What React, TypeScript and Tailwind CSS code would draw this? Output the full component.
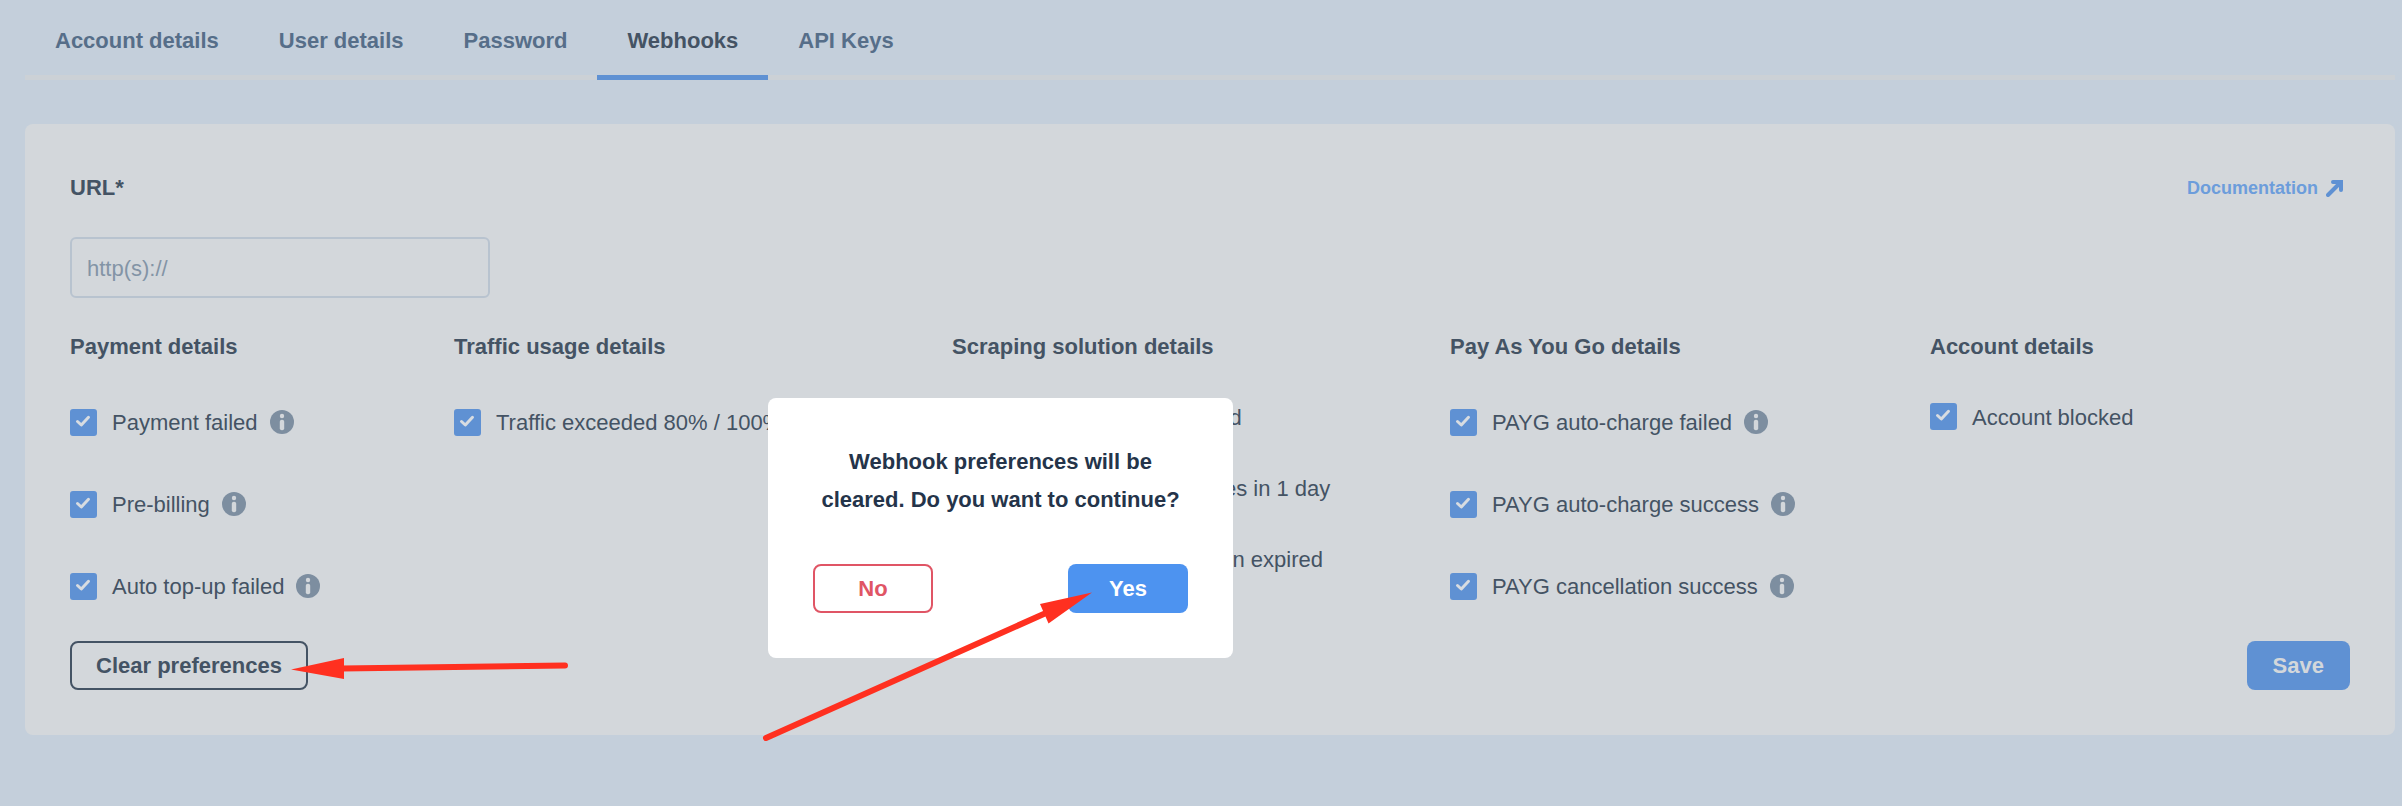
import { useState } from 'react';

type Option = { id: string; label: string; info?: boolean };
type Group = { title: string; options: Option[] };

const tabs = ['Account details', 'User details', 'Password', 'Webhooks', 'API Keys'];

const groups: Group[] = [
  {
    title: 'Payment details',
    options: [
      { id: 'payment-failed', label: 'Payment failed', info: true },
      { id: 'pre-billing', label: 'Pre-billing', info: true },
      { id: 'auto-top-up', label: 'Auto top-up failed', info: true },
    ],
  },
  {
    title: 'Traffic usage details',
    options: [{ id: 'traffic-exceeded', label: 'Traffic exceeded 80% / 100%', info: true }],
  },
  {
    title: 'Scraping solution details',
    options: [
      { id: 'scraping-exceeded', label: 'Scraping traffic exceeded' },
      { id: 'scraping-expires', label: 'Scraping package expires in 1 day' },
      { id: 'scraping-expired', label: 'Scraping API subscription expired' },
    ],
  },
  {
    title: 'Pay As You Go details',
    options: [
      { id: 'payg-failed', label: 'PAYG auto-charge failed', info: true },
      { id: 'payg-success', label: 'PAYG auto-charge success', info: true },
      { id: 'payg-cancel', label: 'PAYG cancellation success', info: true },
    ],
  },
  {
    title: 'Account details',
    options: [{ id: 'account-blocked', label: 'Account blocked' }],
  },
];

function InfoIcon() {
  return (
    <svg className="mb-px h-6 w-6 shrink-0" viewBox="0 0 24 24" aria-hidden="true">
      <circle cx="12" cy="12" r="12" fill="#7d8ea0" />
      <circle cx="12" cy="6" r="2.2" fill="#d3d7db" />
      <rect x="9.8" y="9.8" width="4.4" height="10.4" rx="2" fill="#d3d7db" />
    </svg>
  );
}

function CheckOption({ option }: { option: Option }) {
  const [checked, setChecked] = useState(true);

  return (
    <div className={`flex items-center ${option.info ? 'h-[82px]' : 'h-[71px]'}`}>
      <span className="relative h-[27px] w-[27px] shrink-0">
        <input
          id={option.id}
          type="checkbox"
          checked={checked}
          onChange={() => setChecked(!checked)}
          className="block h-[27px] w-[27px] appearance-none rounded-[3px] border-2 border-[#5f91d3] checked:bg-[#5f91d3]"
        />
        {checked && (
          <svg className="pointer-events-none absolute inset-0 h-[27px] w-[27px]" viewBox="0 0 27 27" fill="none">
            <path d="M7.5 12.5L11.3 16L18.5 8.3" stroke="#d7dce1" strokeWidth="3" strokeLinecap="round" strokeLinejoin="round" />
          </svg>
        )}
      </span>
      <label htmlFor={option.id} className="ml-[15px] whitespace-nowrap pt-0.5">{option.label}</label>
      {option.info && (
        <button type="button" className="ml-3" aria-label={`About ${option.label}`}>
          <InfoIcon />
        </button>
      )}
    </div>
  );
}

function ConfirmDialog() {
  return (
    <div
      role="dialog"
      aria-labelledby="confirm-text"
      className="absolute left-[768px] top-[398px] w-[465px] rounded-lg bg-white px-[45px] pb-[45px] pt-[45px]"
    >
      <p id="confirm-text" className="text-center font-bold leading-[38px] text-[#24344a]">
        Webhook preferences will be cleared. Do you want to continue?
      </p>
      <div className="mt-[45px] flex justify-between font-bold">
        <button type="button" className="h-[49px] w-[120px] rounded-lg border-2 border-[#e05565] text-[#e05565]">No</button>
        <button type="button" className="h-[49px] w-[120px] rounded-lg bg-[#4d93f0] text-white">Yes</button>
      </div>
    </div>
  );
}

// Red pointers drawn over the page
function Pointers() {
  return (
    <svg className="pointer-events-none absolute left-0 top-0 h-[806px] w-[1200px]" viewBox="0 0 1200 806" fill="#ff3020">
      <path d="M291 669.5L344 658V679Z" />
      <path d="M342 668.5L565 665.5" stroke="#ff3020" strokeWidth="6" strokeLinecap="round" />
      <path d="M1092 592.5L1040 604L1048.5 623.5Z" />
      <path d="M766 738L1046 613" stroke="#ff3020" strokeWidth="6" strokeLinecap="round" />
    </svg>
  );
}

export default function App() {
  return (
    <div className="relative min-h-screen bg-[#c4cfdb] pl-[25px] pr-[7px] font-['Liberation_Sans',Arial,sans-serif] text-[22px] leading-[26px] text-[#445364]">
      <nav className="flex h-20 border-b-[5px] border-[#ccd1d6] font-bold">
        {tabs.map((tab) => (
          <a
            key={tab}
            href="#"
            className={`h-20 border-b-[5px] px-[30px] pt-7 ${
              tab === 'Webhooks' ? 'border-[#5f91d3] text-[#445364]' : 'border-transparent text-[#566e89]'
            }`}
          >
            {tab}
          </a>
        ))}
      </nav>

      <main className="mt-11 rounded-lg bg-[#d3d7db] px-[45px] pb-[45px] pt-[51px]">
        <div className="flex items-center justify-between">
          <label htmlFor="url" className="font-bold">URL*</label>
          <a href="#" className="mr-[7px] flex items-center gap-2 text-lg font-bold leading-[26px] text-[#6c9ddb]">
            Documentation
            <svg className="h-[17px] w-[17px]" viewBox="0 0 17 17" fill="none" stroke="#5f91d3" strokeWidth="4" strokeLinecap="round" aria-hidden="true">
              <path d="M2 15L14 3" />
              <path d="M7 2H15V10" />
            </svg>
          </a>
        </div>
        <input
          id="url"
          type="text"
          placeholder="http(s)://"
          className="mt-9 block h-[61px] w-[420px] rounded-md border-2 border-[#b8c3cf] bg-transparent px-[15px] pt-0.5 outline-none placeholder:text-[#8394a6]"
        />

        <div className="mt-9 grid grid-cols-[384fr_498fr_498fr_480fr_420fr]">
          {groups.map((group) => (
            <section key={group.title} className="min-w-0">
              <h2 className="mb-[21px] font-bold">{group.title}</h2>
              {group.options.map((option) => (
                <CheckOption key={option.id} option={option} />
              ))}
            </section>
          ))}
        </div>

        <div className="mt-3.5 flex justify-between font-bold">
          <button type="button" className="h-[49px] rounded-lg border-2 border-[#445364] px-6">Clear preferences</button>
          <button type="button" className="h-[49px] rounded-lg bg-[#5f91d3] px-[26px] text-[#d3d7db]">Save</button>
        </div>
      </main>

      <ConfirmDialog />
      <Pointers />
    </div>
  );
}
